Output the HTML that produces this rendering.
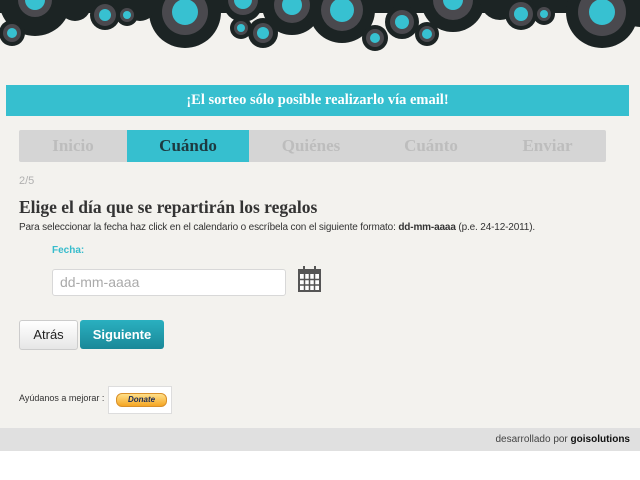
<!DOCTYPE html>
<html><head><meta charset="utf-8"><style>
body{margin:0;width:640px;height:480px;background:#fff;font-family:"Liberation Sans",sans-serif;position:relative;overflow:hidden}
.bg{position:absolute;left:0;top:0;width:640px;height:428px;background:#f3f2ee}
.abs{position:absolute}
.serif{font-family:"Liberation Serif",serif;font-weight:bold}
.banner{left:6px;top:85px;width:623px;height:31px;background:#36bfcf;color:#fff;font-size:14.5px;text-align:center;line-height:31px}
.tabs{left:19px;top:130px;width:587px;height:32px;background:#d5d5d5;border-radius:2px}
.tab{position:absolute;top:0;height:32px;line-height:32px;text-align:center;font-size:17px;color:#bdbdbd}
</style></head><body>
<div class="bg"></div>
<svg class="abs" style="left:0;top:0" width="640" height="60">
<rect x="0" y="0" width="640" height="13" fill="#1c2424"/>
<g fill="#1c2424">
<circle cx="35" cy="0" r="36"/><circle cx="12" cy="33" r="13"/><circle cx="105" cy="15" r="15"/><circle cx="127" cy="15" r="11"/>
<circle cx="185" cy="12" r="36"/><circle cx="243" cy="2" r="20"/><circle cx="241" cy="28" r="11"/><circle cx="263" cy="33" r="15"/>
<circle cx="292" cy="5" r="30"/><circle cx="342" cy="10" r="33"/><circle cx="375" cy="38" r="13"/><circle cx="402" cy="22" r="17"/>
<circle cx="427" cy="34" r="12"/><circle cx="453" cy="0" r="32"/><circle cx="521" cy="14" r="16"/><circle cx="544" cy="14" r="11"/>
<circle cx="602" cy="12" r="36"/><circle cx="640" cy="5" r="22"/><circle cx="140" cy="5" r="16"/><circle cx="500" cy="0" r="20"/><circle cx="75" cy="5" r="16"/>
</g>
<g fill="#4a494e">
<circle cx="35" cy="0" r="17"/><circle cx="12" cy="33" r="9"/><circle cx="105" cy="15" r="11"/><circle cx="127" cy="15" r="7"/>
<circle cx="185" cy="12" r="23"/><circle cx="243" cy="0" r="15"/><circle cx="241" cy="28" r="7"/><circle cx="263" cy="33" r="10"/>
<circle cx="292" cy="5" r="18"/><circle cx="342" cy="10" r="21"/><circle cx="375" cy="38" r="9"/><circle cx="402" cy="22" r="12"/>
<circle cx="427" cy="34" r="8"/><circle cx="453" cy="0" r="20"/><circle cx="521" cy="14" r="12"/><circle cx="544" cy="14" r="7"/>
<circle cx="602" cy="12" r="24"/>
</g>
<g fill="#37c1d1">
<circle cx="35" cy="0" r="10"/><circle cx="12" cy="33" r="5"/><circle cx="105" cy="15" r="6"/><circle cx="127" cy="15" r="4"/>
<circle cx="185" cy="12" r="13"/><circle cx="243" cy="0" r="9"/><circle cx="241" cy="28" r="4"/><circle cx="263" cy="33" r="6"/>
<circle cx="292" cy="5" r="10"/><circle cx="342" cy="10" r="12"/><circle cx="375" cy="38" r="5"/><circle cx="402" cy="22" r="7"/>
<circle cx="427" cy="34" r="5"/><circle cx="453" cy="0" r="10"/><circle cx="521" cy="14" r="7"/><circle cx="544" cy="14" r="4"/>
<circle cx="602" cy="12" r="13"/>
</g>
</svg>
<div class="abs banner serif">¡El sorteo sólo posible realizarlo vía email!</div>
<div class="abs tabs">
<div class="tab serif" style="left:0;width:108px">Inicio</div>
<div class="tab serif" style="left:108px;width:122px;background:#36bfcf;color:#1d3a40">Cuándo</div>
<div class="tab serif" style="left:230px;width:124px">Quiénes</div>
<div class="tab serif" style="left:354px;width:116px">Cuánto</div>
<div class="tab serif" style="left:470px;width:117px">Enviar</div>
</div>
<div class="abs" style="left:19px;top:175px;font-size:11px;color:#b0b0b0">2/5</div>
<div class="abs serif" style="left:19px;top:197px;font-size:17.5px;color:#333">Elige el día que se repartirán los regalos</div>
<div class="abs" style="left:19px;top:222px;font-size:10px;color:#333;letter-spacing:-0.15px">Para seleccionar la fecha haz click en el calendario o escríbela con el siguiente formato: <b>dd-mm-aaaa</b> (p.e. 24-12-2011).</div>
<div class="abs" style="left:52px;top:245px;font-size:10px;color:#37bccc;font-weight:bold">Fecha:</div>
<div class="abs" style="left:52px;top:269px;width:232px;height:25px;background:#fff;border:1px solid #d8d8d8;border-radius:3px;font-size:14px;color:#aaa;line-height:25px;text-indent:7px">dd-mm-aaaa</div>
<svg class="abs" style="left:298px;top:266px" width="24" height="27">
<rect x="1" y="4" width="21" height="21" fill="#fff" stroke="#555" stroke-width="2"/>
<rect x="1" y="4" width="21" height="4" fill="#555"/>
<g stroke="#555" stroke-width="1.5"><line x1="6.5" y1="8" x2="6.5" y2="25"/><line x1="11.5" y1="8" x2="11.5" y2="25"/><line x1="16.5" y1="8" x2="16.5" y2="25"/><line x1="1" y1="13.5" x2="22" y2="13.5"/><line x1="1" y1="19" x2="22" y2="19"/></g>
<rect x="5" y="0" width="2" height="5" fill="#555"/><rect x="16" y="0" width="2" height="5" fill="#555"/>
</svg>
<div class="abs" style="left:19px;top:320px;width:57px;height:28px;border:1px solid #ccc;border-radius:3px;background:linear-gradient(#fff,#e6e6e6);font-size:13px;text-align:center;line-height:28px;color:#222">Atrás</div>
<div class="abs" style="left:80px;top:320px;width:84px;height:29px;border-radius:3px;background:linear-gradient(#2ab0c0,#1a8898);font-size:13px;font-weight:bold;text-align:center;line-height:29px;color:#fff">Siguiente</div>
<div class="abs" style="left:19px;top:393px;font-size:9px;color:#333">Ayúdanos a mejorar :</div>
<div class="abs" style="left:108px;top:386px;width:62px;height:26px;border:1px solid #ddd;background:#fff"></div>
<div class="abs" style="left:116px;top:393px;width:49px;height:12px;border-radius:6px;background:linear-gradient(#ffe08a,#f5a623);border:1px solid #d9902a;font-size:8px;font-style:italic;font-weight:bold;color:#1a2a55;text-align:center;line-height:12px">Donate</div>
<div class="abs" style="left:0;top:428px;width:640px;height:23px;background:#e0e0e0"></div>
<div class="abs" style="right:10px;top:434px;font-size:10px;color:#444">desarrollado por <b style="color:#111">goisolutions</b></div>
</body></html>
